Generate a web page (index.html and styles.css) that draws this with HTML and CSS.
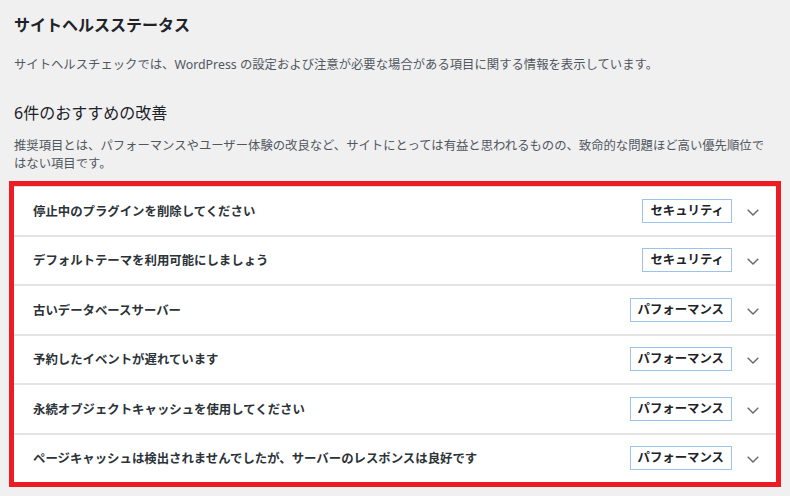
FILE: index.html
```html
<!DOCTYPE html>
<html lang="ja">
<head>
  <meta charset="UTF-8">
  <title>サイトヘルスステータス</title>
  <link rel="stylesheet" href="styles.css">
</head>
<body>

  <div class="health-content">
    <h2 class="title">サイトヘルスステータス</h2>
    <p class="desc">サイトヘルスチェックでは、WordPress の設定および注意が必要な場合がある項目に関する情報を表示しています。</p>

    <h3 class="issues-title">6件のおすすめの改善</h3>
    <p class="desc">推奨項目とは、パフォーマンスやユーザー体験の改良など、サイトにとっては有益と思われるものの、致命的な問題ほど高い優先順位ではない項目です。</p>

    <div class="accordion">
      <div class="accordion-row">
        <span class="row-title">停止中のプラグインを削除してください</span>
        <span class="badge">セキュリティ</span>
        <span class="chevron"><svg width="12" height="7" viewBox="0 0 12 7"><path d="M0.7 0.7 L6 6 L11.3 0.7" fill="none" stroke="#646970" stroke-width="1.4"/></svg></span>
      </div>
      <div class="accordion-row">
        <span class="row-title">デフォルトテーマを利用可能にしましょう</span>
        <span class="badge">セキュリティ</span>
        <span class="chevron"><svg width="12" height="7" viewBox="0 0 12 7"><path d="M0.7 0.7 L6 6 L11.3 0.7" fill="none" stroke="#646970" stroke-width="1.4"/></svg></span>
      </div>
      <div class="accordion-row">
        <span class="row-title">古いデータベースサーバー</span>
        <span class="badge">パフォーマンス</span>
        <span class="chevron"><svg width="12" height="7" viewBox="0 0 12 7"><path d="M0.7 0.7 L6 6 L11.3 0.7" fill="none" stroke="#646970" stroke-width="1.4"/></svg></span>
      </div>
      <div class="accordion-row">
        <span class="row-title">予約したイベントが遅れています</span>
        <span class="badge">パフォーマンス</span>
        <span class="chevron"><svg width="12" height="7" viewBox="0 0 12 7"><path d="M0.7 0.7 L6 6 L11.3 0.7" fill="none" stroke="#646970" stroke-width="1.4"/></svg></span>
      </div>
      <div class="accordion-row">
        <span class="row-title">永続オブジェクトキャッシュを使用してください</span>
        <span class="badge">パフォーマンス</span>
        <span class="chevron"><svg width="12" height="7" viewBox="0 0 12 7"><path d="M0.7 0.7 L6 6 L11.3 0.7" fill="none" stroke="#646970" stroke-width="1.4"/></svg></span>
      </div>
      <div class="accordion-row">
        <span class="row-title">ページキャッシュは検出されませんでしたが、サーバーのレスポンスは良好です</span>
        <span class="badge">パフォーマンス</span>
        <span class="chevron"><svg width="12" height="7" viewBox="0 0 12 7"><path d="M0.7 0.7 L6 6 L11.3 0.7" fill="none" stroke="#646970" stroke-width="1.4"/></svg></span>
      </div>
    </div>
  </div>

</body>
</html>
```

FILE: styles.css
```css
* {
  margin: 0;
  padding: 0;
  box-sizing: border-box;
}

body {
  background: #f0f0f1;
  font-family: "Noto Sans", "Noto Sans CJK JP", sans-serif;
  color: #1d2327;
  height: 100vh;
  overflow: hidden;
}

.health-content {
  padding: 14px 14px 0 14px;
}

.title {
  font-size: 16px;
  font-weight: bold;
  line-height: 22px;
  color: #1d2327;
}

.desc {
  font-size: 12.35px;
  line-height: 18px;
  color: #50575e;
}

.title + .desc {
  margin-top: 20px;
}

.issues-title {
  font-size: 16px;
  font-weight: normal;
  line-height: 22px;
  margin-top: 28px;
  color: #1d2327;
}

.issues-title + .desc {
  margin-top: 13px;
}

.accordion {
  margin-top: 13px;
  background: #fff;
  border-top: 1px solid #dcdcde;
  outline: 5px solid #ed1c24;
}

.accordion-row {
  display: flex;
  align-items: center;
  height: 49.5px;
  padding: 0 17px 0 19px;
  border-bottom: 2px solid #e4e4e5;
}

.accordion-row:last-child {
  height: 47.5px;
  border-bottom: none;
}

.row-title {
  flex: 1;
  font-size: 12.4px;
  font-weight: bold;
  color: #2c3338;
}

.badge {
  font-size: 12.4px;
  font-weight: bold;
  line-height: 22px;
  padding: 0 7px;
  border: 1px solid #9cc3ea;
  color: #1d2327;
}

.chevron {
  display: flex;
  margin-left: 15px;
  padding-top: 3px;
}
```
